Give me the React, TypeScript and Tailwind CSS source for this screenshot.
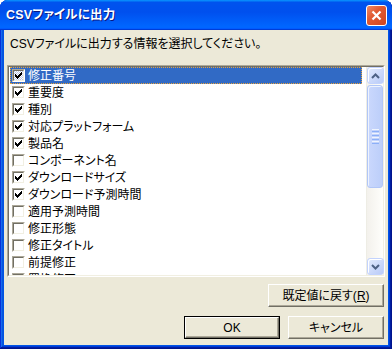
import React from "react";

const items: { label: string; checked: boolean }[] = [
  { label: "修正番号", checked: true },
  { label: "重要度", checked: true },
  { label: "種別", checked: true },
  { label: "対応プラットフォーム", checked: true },
  { label: "製品名", checked: true },
  { label: "コンポーネント名", checked: false },
  { label: "ダウンロードサイズ", checked: true },
  { label: "ダウンロード予測時間", checked: true },
  { label: "適用予測時間", checked: false },
  { label: "修正形態", checked: false },
  { label: "修正タイトル", checked: false },
  { label: "前提修正", checked: false },
  { label: "置換修正", checked: false },
];

function Check() {
  return (
    <svg width="7" height="7" viewBox="0 0 7 7" shapeRendering="crispEdges" className="block">
      <rect x="6" y="0" width="1" height="1" fill="#000" />
      <rect x="5" y="1" width="2" height="1" fill="#000" />
      <rect x="0" y="2" width="1" height="1" fill="#000" />
      <rect x="4" y="2" width="3" height="1" fill="#000" />
      <rect x="0" y="3" width="2" height="1" fill="#000" />
      <rect x="3" y="3" width="3" height="1" fill="#000" />
      <rect x="0" y="4" width="5" height="1" fill="#000" />
      <rect x="1" y="5" width="3" height="1" fill="#000" />
      <rect x="2" y="6" width="1" height="1" fill="#000" />
    </svg>
  );
}

function CheckBox({ checked, selected }: { checked: boolean; selected: boolean }) {
  return (
    <div className="w-[13px] h-[13px] shrink-0 border border-t-[#aca899] border-l-[#aca899] border-r-white border-b-white">
      <div
        className={
          "w-full h-full border border-t-[#716f64] border-l-[#716f64] border-r-[#f1efe2] border-b-[#f1efe2] flex items-center justify-center " +
          (selected
            ? "bg-[repeating-conic-gradient(#ffffff_0_25%,#b8c8e8_0_50%)] bg-[length:2px_2px]"
            : "bg-white")
        }
      >
        {checked && <Check />}
      </div>
    </div>
  );
}

function Chevron({ up }: { up: boolean }) {
  return (
    <svg width="9" height="6" viewBox="0 0 9 6" className="block">
      <path
        d={up ? "M1 5 L4.5 1.5 L8 5" : "M1 1 L4.5 4.5 L8 1"}
        fill="none"
        stroke="#4d6185"
        strokeWidth="2"
      />
    </svg>
  );
}

function ScrollButton({ up }: { up: boolean }) {
  return (
    <div className="h-[17px] w-[17px] rounded-[3px] border border-[#c3d3fd] bg-[linear-gradient(135deg,#e2eafe,#b9cbf8)] shadow-[inset_1px_1px_0_#ffffff] flex items-center justify-center">
      <Chevron up={up} />
    </div>
  );
}

function Button({
  children,
  w,
  isDefault,
}: {
  children: React.ReactNode;
  w: string;
  isDefault?: boolean;
}) {
  const inner = (
    <div className="h-full w-full border border-t-white border-l-white border-r-[#716f64] border-b-[#716f64] shadow-[inset_-1px_-1px_0_#aca899] bg-[#ece9d8] flex items-center justify-center text-[12px] text-black">
      {children}
    </div>
  );
  return (
    <div className={w + " h-[23px] " + (isDefault ? "border border-black" : "")}>{inner}</div>
  );
}

export default function App() {
  const font = "font-['Liberation_Sans','Noto_Sans_CJK_JP',sans-serif] [font-feature-settings:'palt']";
  return (
    <div
      className={
        "w-[392px] h-[349px] flex flex-col rounded-t-[8px] overflow-hidden bg-[#0055e5] shadow-[inset_-1px_-1px_0_#00138c,inset_1px_0_0_#0831d9,inset_-2px_-2px_0_#001ea0,inset_2px_0_0_#166aee,inset_-3px_-3px_0_#003bda,inset_3px_0_0_#0855dd] " +
        font
      }
    >
      {/* Title bar */}
      <div className="h-[30px] shrink-0 flex items-center pl-[6px] pr-[5px] bg-[linear-gradient(180deg,#0997ff,#0053ee_8%,#0050ee_40%,#0066ff_88%,#0066ff_93%,#005bff_95%,#003dd7_96%,#003dd7)]">
        <span className="text-white font-bold text-[12.5px] [text-shadow:1px_1px_0_#0a1883] tracking-[0.2px]">
          CSVファイルに出力
        </span>
        <div className="ml-auto w-[21px] h-[21px] rounded-[3px] border border-white bg-[linear-gradient(135deg,#ee8a66,#e15a32_40%,#cf4520)] flex items-center justify-center">
          <svg width="11" height="11" viewBox="0 0 11 11" className="block">
            <path d="M1.5 1.5 L9.5 9.5 M9.5 1.5 L1.5 9.5" stroke="#ffffff" strokeWidth="2.2" />
          </svg>
        </div>
      </div>

      {/* Content */}
      <div className="flex-1 mx-[4px] mb-[4px] bg-[#ece9d8] flex flex-col">
        <p className="mt-[7px] ml-[6px] h-[14px] leading-[14px] text-[12px] text-black">
          CSVファイルに出力する情報を選択してください。
        </p>

        {/* List box */}
        <div className="mt-[14px] ml-[3px] w-[378px] h-[212px] border border-t-[#aca899] border-l-[#aca899] border-r-white border-b-white">
          <div className="w-full h-full border border-t-[#716f64] border-l-[#716f64] border-r-[#f1efe2] border-b-[#f1efe2] bg-white flex">
            <div className="flex-1 overflow-hidden">
              {items.map((it, i) => {
                const sel = i === 0;
                return (
                  <div
                    key={it.label}
                    className={
                      "h-[17px] ml-[1px] mr-[4px] flex items-center pl-[2px] gap-[3px] " +
                      (sel
                        ? "bg-[#316ac5] text-white outline-1 outline-dotted outline-[#e7a33d] -outline-offset-1"
                        : "text-black")
                    }
                  >
                    <CheckBox checked={it.checked} selected={sel} />
                    <span className="text-[12px] leading-[14px] whitespace-nowrap">{it.label}</span>
                  </div>
                );
              })}
            </div>
            {/* Scrollbar */}
            <div className="w-[17px] shrink-0 flex flex-col bg-[linear-gradient(90deg,#f3f1ec,#fefefb)] border-l border-[#eeede5]">
              <ScrollButton up />
              <div className="mt-[1px] h-[103px] rounded-[3px] border border-[#b1c6f7] bg-[linear-gradient(90deg,#cad8fd,#bccef9)] shadow-[inset_1px_1px_0_#eef3fe] flex flex-col items-center justify-center gap-[1px]">
                <div className="w-[7px] h-[1px] bg-[#eef4fe]" />
                <div className="w-[7px] h-[1px] bg-[#8cb0f8]" />
                <div className="w-[7px] h-[1px] bg-[#eef4fe]" />
                <div className="w-[7px] h-[1px] bg-[#8cb0f8]" />
                <div className="w-[7px] h-[1px] bg-[#eef4fe]" />
                <div className="w-[7px] h-[1px] bg-[#8cb0f8]" />
                <div className="w-[7px] h-[1px] bg-[#eef4fe]" />
                <div className="w-[7px] h-[1px] bg-[#8cb0f8]" />
              </div>
              <div className="flex-1" />
              <ScrollButton up={false} />
            </div>
          </div>
        </div>

        {/* Reset button */}
        <div className="mt-[7px] self-end mr-[4px]">
          <Button w="w-[116px]">
            <span>
              既定値に戻す(<span className="underline">R</span>)
            </span>
          </Button>
        </div>

        {/* OK / Cancel */}
        <div className="mt-[9px] self-end mr-[4px] flex gap-[8px]">
          <Button w="w-[96px]" isDefault>
            OK
          </Button>
          <Button w="w-[96px]">キャンセル</Button>
        </div>
      </div>
    </div>
  );
}
